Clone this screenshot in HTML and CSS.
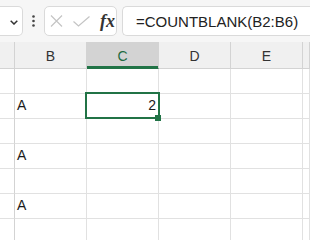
FILE: index.html
```html
<!DOCTYPE html>
<html>
<head>
<meta charset="utf-8">
<link rel="stylesheet" href="styles.css">
</head>
<body>
<div class="toolbar">
  <div class="namebox">
    <svg class="chev" width="8" height="5" viewBox="0 0 8 5"><polyline points="0.7,0.7 4,4 7.3,0.7" fill="none" stroke="#333" stroke-width="1.5"/></svg>
  </div>
  <div class="dots">
    <svg width="3" height="12" viewBox="0 0 3 12"><circle cx="1.5" cy="1.5" r="1.3" fill="#444"/><circle cx="1.5" cy="6" r="1.3" fill="#444"/><circle cx="1.5" cy="10.5" r="1.3" fill="#444"/></svg>
  </div>
  <div class="fbtns">
    <svg class="ico-x" width="13" height="12" viewBox="0 0 13 12"><path d="M1 0.5 L12 11.5 M12 0.5 L1 11.5" stroke="#c4c4c4" stroke-width="1.2" fill="none"/></svg>
    <svg class="ico-check" width="17" height="11" viewBox="0 0 17 11"><polyline points="0.5,5.5 5.5,10 16.5,0.5" fill="none" stroke="#c4c4c4" stroke-width="1.2"/></svg>
    <span class="fx">fx</span>
  </div>
  <div class="fbox">=COUNTBLANK(B2:B6)</div>
</div>
<div class="sheet">
  <div class="hdr corner"></div>
  <div class="hdr">B</div>
  <div class="hdr sel">C</div>
  <div class="hdr">D</div>
  <div class="hdr">E</div>
  <div class="hdr"></div>

  <div class="rh"></div><div class="cell"></div><div class="cell"></div><div class="cell"></div><div class="cell"></div><div class="cell"></div>
  <div class="rh"></div><div class="cell">A</div><div class="cell num active">2<div class="selbox"><div class="handle"></div></div></div><div class="cell"></div><div class="cell"></div><div class="cell"></div>
  <div class="rh"></div><div class="cell"></div><div class="cell"></div><div class="cell"></div><div class="cell"></div><div class="cell"></div>
  <div class="rh"></div><div class="cell">A</div><div class="cell"></div><div class="cell"></div><div class="cell"></div><div class="cell"></div>
  <div class="rh"></div><div class="cell"></div><div class="cell"></div><div class="cell"></div><div class="cell"></div><div class="cell"></div>
  <div class="rh"></div><div class="cell">A</div><div class="cell"></div><div class="cell"></div><div class="cell"></div><div class="cell"></div>
  <div class="rh"></div><div class="cell"></div><div class="cell"></div><div class="cell"></div><div class="cell"></div><div class="cell"></div>
</div>
</body>
</html>
```
FILE: styles.css
```css
html, body {
  margin: 0;
  padding: 0;
  background: #ffffff;
}
body {
  width: 310px;
  height: 240px;
  overflow: hidden;
  font-family: "Liberation Sans", Arial, sans-serif;
  color: #222;
}
.toolbar {
  height: 42px;
  box-sizing: border-box;
  padding-top: 6px;
  background: #f6f6f6;
  display: flex;
  align-items: flex-start;
  overflow: hidden;
}
.namebox {
  width: 23px;
  height: 30px;
  flex: none;
  box-sizing: border-box;
  border: 1px solid #dadada;
  border-left: none;
  border-radius: 0 5px 5px 0;
  background: #fff;
  display: flex;
  align-items: center;
  justify-content: flex-end;
  padding-right: 4px;
}
.chev {
  display: block;
  margin-top: 2px;
}
.dots {
  width: 21px;
  height: 30px;
  flex: none;
  display: flex;
  align-items: center;
  justify-content: center;
}
.dots svg {
  display: block;
}
.fbtns {
  width: 73px;
  height: 30px;
  flex: none;
  box-sizing: border-box;
  border: 1px solid #dadada;
  border-radius: 5px;
  background: #fff;
  display: flex;
  align-items: center;
  padding-left: 5px;
}
.fbtns svg {
  display: block;
}
.ico-check {
  margin-left: 10px;
}
.fx {
  margin-left: 10px;
  font-family: "Liberation Serif", "DejaVu Serif", serif;
  font-style: italic;
  font-weight: bold;
  font-size: 18px;
  color: #333;
  line-height: 20px;
}
.fbox {
  flex: 1;
  height: 30px;
  margin-left: 5px;
  box-sizing: border-box;
  border: 1px solid #dadada;
  border-right: none;
  border-radius: 5px 0 0 5px;
  background: #fff;
  padding-left: 13px;
  font-size: 15px;
  line-height: 29px;
  color: #222;
  white-space: nowrap;
  overflow: hidden;
}
.sheet {
  display: grid;
  grid-template-columns: 15px 72px 72px 72px 72px 7px;
  grid-template-rows: 27px repeat(7, 25px);
}
.hdr {
  background: #f0f0f0;
  box-sizing: border-box;
  border-right: 1px solid #d3d3d3;
  border-bottom: 1px solid #d3d3d3;
  font-size: 14px;
  color: #333;
  text-align: center;
  line-height: 26px;
  padding-top: 1px;
}
.hdr.sel {
  background: #d3d3d3;
  color: #1e6b41;
  box-shadow: inset 0 -2px 0 #217346;
  border-bottom-color: #217346;
}
.rh {
  background: #ffffff;
  box-sizing: border-box;
  border-right: 1px solid #d3d3d3;
  border-bottom: 1px solid #e1e1e1;
}
.cell {
  box-sizing: border-box;
  border-right: 1px solid #e1e1e1;
  border-bottom: 1px solid #e1e1e1;
  font-size: 14px;
  line-height: 23px;
  padding: 0 2px;
  color: #1a1a1a;
  white-space: nowrap;
}
.cell.num {
  text-align: right;
}
.cell.active {
  position: relative;
}
.selbox {
  position: absolute;
  left: -2px;
  top: -2px;
  right: -2px;
  bottom: -1px;
  border: 2px solid #217346;
}
.handle {
  position: absolute;
  right: -3px;
  bottom: -4px;
  width: 6px;
  height: 6px;
  background: #217346;
}
```
